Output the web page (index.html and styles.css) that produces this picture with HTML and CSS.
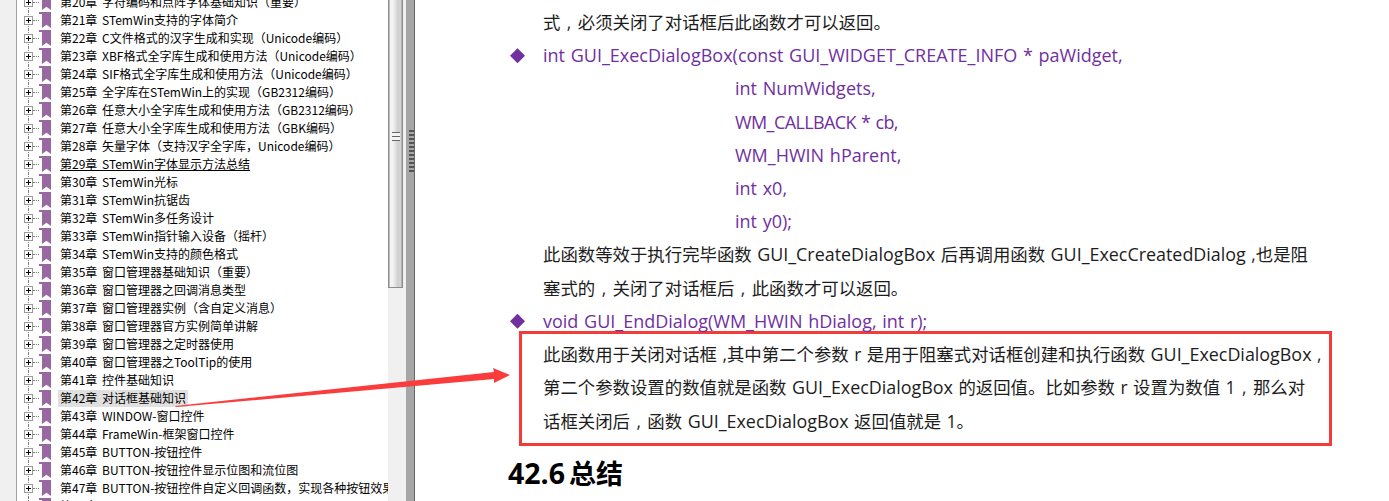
FILE: index.html
```html
<!DOCTYPE html>
<html lang="zh-CN">

<head>
    <meta charset="UTF-8">
    <title>STemWin 教程</title>
    <link rel="stylesheet" href="styles.css">
</head>

<body>
    <div class="viewer">
        <div class="rail"></div>

        <!-- 书签 -->
        <ul class="tree">
            <li><i class="plus"></i><i class="mark"></i><span>第20章 字符编码和点阵字体基础知识（重要）</span></li>
            <li><i class="plus"></i><i class="mark"></i><span>第21章 STemWin支持的字体简介</span></li>
            <li><i class="plus"></i><i class="mark"></i><span>第22章 C文件格式的汉字生成和实现（Unicode编码）</span></li>
            <li><i class="plus"></i><i class="mark"></i><span>第23章 XBF格式全字库生成和使用方法（Unicode编码）</span></li>
            <li><i class="plus"></i><i class="mark"></i><span>第24章 SIF格式全字库生成和使用方法（Unicode编码）</span></li>
            <li><i class="plus"></i><i class="mark"></i><span>第25章 全字库在STemWin上的实现（GB2312编码）</span></li>
            <li><i class="plus"></i><i class="mark"></i><span>第26章 任意大小全字库生成和使用方法（GB2312编码）</span></li>
            <li><i class="plus"></i><i class="mark"></i><span>第27章 任意大小全字库生成和使用方法（GBK编码）</span></li>
            <li><i class="plus"></i><i class="mark"></i><span>第28章 矢量字体（支持汉字全字库，Unicode编码）</span></li>
            <li><i class="plus"></i><i class="mark"></i><span class="visited">第29章 STemWin字体显示方法总结</span></li>
            <li><i class="plus"></i><i class="mark"></i><span>第30章 STemWin光标</span></li>
            <li><i class="plus"></i><i class="mark"></i><span>第31章 STemWin抗锯齿</span></li>
            <li><i class="plus"></i><i class="mark"></i><span>第32章 STemWin多任务设计</span></li>
            <li><i class="plus"></i><i class="mark"></i><span>第33章 STemWin指针输入设备（摇杆）</span></li>
            <li><i class="plus"></i><i class="mark"></i><span>第34章 STemWin支持的颜色格式</span></li>
            <li><i class="plus"></i><i class="mark"></i><span>第35章 窗口管理器基础知识（重要）</span></li>
            <li><i class="plus"></i><i class="mark"></i><span>第36章 窗口管理器之回调消息类型</span></li>
            <li><i class="plus"></i><i class="mark"></i><span>第37章 窗口管理器实例（含自定义消息）</span></li>
            <li><i class="plus"></i><i class="mark"></i><span>第38章 窗口管理器官方实例简单讲解</span></li>
            <li><i class="plus"></i><i class="mark"></i><span>第39章 窗口管理器之定时器使用</span></li>
            <li><i class="plus"></i><i class="mark"></i><span>第40章 窗口管理器之ToolTip的使用</span></li>
            <li><i class="plus"></i><i class="mark"></i><span>第41章 控件基础知识</span></li>
            <li><i class="plus"></i><i class="mark"></i><span class="selected">第42章 对话框基础知识</span></li>
            <li><i class="plus"></i><i class="mark"></i><span>第43章 WINDOW-窗口控件</span></li>
            <li><i class="plus"></i><i class="mark"></i><span>第44章 FrameWin-框架窗口控件</span></li>
            <li><i class="plus"></i><i class="mark"></i><span>第45章 BUTTON-按钮控件</span></li>
            <li><i class="plus"></i><i class="mark"></i><span>第46章 BUTTON-按钮控件显示位图和流位图</span></li>
            <li><i class="plus"></i><i class="mark"></i><span>第47章 BUTTON-按钮控件自定义回调函数，实现各种按钮效果</span></li>
            <li><i class="plus"></i><i class="mark"></i><span>第48章</span></li>
        </ul>

        <div class="scrollbar">
            <div class="thumb"><i class="grip"></i></div>
        </div>
        <div class="splitter"><div class="dots"></div></div>

        <!-- 正文 -->
        <main class="page">
            <p>式<b class="comma">,</b>必须关闭了对话框后此函数才可以返回。</p>
            <p class="api"><i class="diamond"></i>int GUI_ExecDialogBox(const GUI_WIDGET_CREATE_INFO * paWidget,</p>
            <p class="api arg">int NumWidgets,</p>
            <p class="api arg caps">WM_CALLBACK * cb,</p>
            <p class="api arg">WM_HWIN hParent,</p>
            <p class="api arg">int x0,</p>
            <p class="api arg">int y0);</p>
            <p>此函数等效于执行完毕函数 <span class="en">GUI_CreateDialogBox</span> 后再调用函数 <span class="en">GUI_ExecCreatedDialog</span> ,也是阻</p>
            <p>塞式的<b class="comma">,</b>关闭了对话框后<b class="comma">,</b>此函数才可以返回。</p>
            <p class="api"><i class="diamond"></i>void GUI_EndDialog(WM_HWIN hDialog, int r);</p>
            <div class="note">
                <p>此函数用于关闭对话框 ,其中第二个参数 r 是用于阻塞式对话框创建和执行函数 <span class="en">GUI_ExecDialogBox</span> ,</p>
                <p>第二个参数设置的数值就是函数 <span class="en">GUI_ExecDialogBox</span> 的返回值。比如参数 r 设置为数值 1<b class="comma">,</b>那么对</p>
                <p>话框关闭后<b class="comma">,</b>函数 <span class="en">GUI_ExecDialogBox</span> 返回值就是 1。</p>
            </div>
            <h2><span class="num">42.6</span> 总结</h2>
        </main>

        <!-- 标注箭头 -->
        <svg class="arrow" width="345" height="50" viewBox="170 360 345 50">
            <polygon points="175,406 494,372 493,368 510,375 494,383 494,379 176,407" fill="#fb3c3c"/>
        </svg>
    </div>
</body>

</html>
```

FILE: styles.css
```css
* {
    box-sizing: border-box;
}

html,
body {
    height: 100%;
    margin: 0;
    overflow: hidden;
    background: #fff;
}

.viewer {
    position: relative;
    display: flex;
    height: 501px;
    overflow: hidden;
    font-family: "Noto Sans CJK SC", sans-serif;
    color: #000;
}

.rail {
    flex: 0 0 17px;
    background: #f0f0f0;
    border-right: 1px solid #a0a0a0;
}

/* tree */
.tree {
    flex: 0 0 371px;
    height: 501px;
    margin: 0;
    padding: 0;
    overflow: hidden;
    list-style: none;
    background: #fff;
}

.tree li {
    position: relative;
    display: flex;
    align-items: center;
    height: 18px;
    padding-left: 7px;
    font-size: 12px;
    white-space: nowrap;
}

.tree li:first-child {
    margin-top: -7px;
}

.tree li::before {
    content: "";
    position: absolute;
    left: 11px;
    top: 0;
    bottom: 0;
    border-left: 1px dotted #808080;
}

.plus {
    position: relative;
    z-index: 1;
    flex: none;
    width: 9px;
    height: 9px;
    background:
        linear-gradient(#000, #000) center / 5px 1px no-repeat,
        linear-gradient(#000, #000) center / 1px 5px no-repeat,
        #fff;
    border: 1px solid #9a9a9a;
}

.plus::after {
    content: "";
    position: absolute;
    left: 8px;
    top: 3px;
    width: 6px;
    border-top: 1px dotted #808080;
}

.mark {
    flex: none;
    width: 12px;
    height: 16px;
    margin-left: 6px;
    background: #9a68a0;
    clip-path: polygon(0 0, 100% 0, 100% 100%, 62% 80%, 25% 100%, 25% 12%, 0 12%);
}

.tree span {
    align-self: flex-end;
    margin-left: 7px;
    padding: 0 2px 2px;
    line-height: 15px;
    word-spacing: 2px;
}

.visited {
    text-decoration: underline;
}

.selected {
    background: #e0e0e0;
}

/* scrollbar and splitter */
.scrollbar {
    flex: 0 0 18px;
    background: #f0f0f0;
}

.thumb {
    position: relative;
    width: 15px;
    height: 288px;
    background: linear-gradient(90deg, #8c8c8c 0, #8c8c8c 1px, #f2f2f2 2px, #f2f2f2 5px, #cfcfcf 10px, #d6d6d6 13px, #8c8c8c 14px);
    border-bottom: 1px solid #8c8c8c;
}

.grip {
    position: absolute;
    left: 4px;
    top: 132px;
    width: 8px;
    height: 9px;
    background: repeating-linear-gradient(#666 0, #666 1px, #f4f4f4 1px, #f4f4f4 4px);
}

.splitter {
    flex: 0 0 8px;
    padding-top: 129px;
    background: #a6a6a6;
    border-right: 1px solid #666;
}

.dots {
    width: 5px;
    height: 44px;
    margin-left: 3px;
    background-image: radial-gradient(circle, #555 1px, transparent 1px);
    background-size: 2.5px 4px;
}

/* page */
.page {
    flex: 1;
    min-width: 0;
    padding: 6px 0 0 128px;
    font-size: 17.4px;
    line-height: 33.2px;
    color: #1c1c1c;
    font-family: "Open Sans", "Noto Sans CJK SC", sans-serif;
}

.page p {
    position: relative;
    height: 33.2px;
    margin: 0;
    white-space: nowrap;
    word-spacing: 1px;
}

.en {
    font-size: 17.9px;
}

.comma {
    display: inline-block;
    width: 1em;
    font-weight: normal;
    text-align: center;
}

.page .api {
    font-size: 18px;
    color: #7030a0;
}

.page .arg {
    padding-left: 192px;
}

.page .caps {
    letter-spacing: -0.6px;
}

.diamond {
    position: absolute;
    left: -33px;
    top: 9px;
    width: 15px;
    height: 15px;
    background: #7030a0;
    clip-path: polygon(50% 0, 100% 50%, 50% 100%, 0 50%);
}

.note {
    width: 813px;
    height: 115px;
    margin: -7px 0 0 -24px;
    padding: 4.4px 0 0 21px;
    border: 3px solid #f33b3b;
}

.page h2 {
    margin: 9px 0 0 -35px;
    font-size: 27px;
    line-height: 36px;
    font-weight: bold;
    color: #000;
    word-spacing: -3px;
}

.num {
    font-size: 28.5px;
}

/* overlay */
.arrow {
    position: absolute;
    left: 170px;
    top: 360px;
}
```
